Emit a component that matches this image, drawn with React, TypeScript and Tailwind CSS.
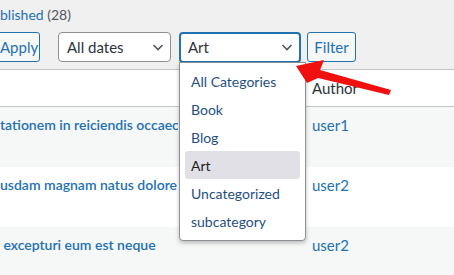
import React from "react";

const font = { fontFamily: 'Lato, "Noto Sans", sans-serif' };

function Chevron() {
  return (
    <svg className="h-[12px] w-[12px] text-[#50575e]" viewBox="0 0 12 12" fill="none" stroke="currentColor" strokeWidth={1.6}>
      <path d="M1.5 4 L6 8.5 L10.5 4" />
    </svg>
  );
}

const categories = ["All Categories", "Book", "Blog", "Art", "Uncategorized", "subcategory"];

const rows = [
  { title: "tationem in reiciendis occaec", author: "user1", bg: "bg-[#f6f7f7]" },
  { title: "usdam magnam natus dolore", author: "user2", bg: "bg-white" },
  { title: " excepturi eum est neque", author: "user2", bg: "bg-[#f6f7f7]" },
];

export default function App() {
  return (
    <div className="relative h-[275px] w-[454px] overflow-hidden bg-[#f0f0f1] text-[14px]" style={font}>
      {/* status links */}
      <div className="h-[32px] pt-[5px] text-[14px] leading-[20px]">
        <span className="text-[#2271b1]">blished</span>{" "}
        <span className="text-[#50575e]">(28)</span>
      </div>

      {/* toolbar */}
      <div className="flex h-[30px] items-center">
        <button className="ml-[-11px] h-[30px] w-[51px] rounded-[3px] border border-[#2271b1] bg-[#f6f7f7] pl-[10px] text-left text-[15px] text-[#2271b1]">
          Apply
        </button>
        <div className="ml-[18px] flex h-[30px] w-[113px] items-center justify-between rounded-[4px] border border-[#8c8f94] bg-white pl-[8px] pr-[6px] text-[15px] text-[#2c3338]">
          <span>All dates</span>
          <Chevron />
        </div>
        <div className="ml-[8px] flex h-[31px] w-[122px] items-center justify-between rounded-[4px] border-2 border-[#2271b1] bg-white pl-[7px] pr-[6px] text-[15px] text-[#2c3338]">
          <span>Art</span>
          <Chevron />
        </div>
        <button className="ml-[6px] h-[30px] w-[49px] rounded-[3px] border border-[#2271b1] bg-[#f6f7f7] text-[15px] text-[#2271b1]">
          Filter
        </button>
      </div>

      {/* table */}
      <div className="mt-[7px] border-t border-[#c3c4c7]">
        <div className="flex h-[37px] items-center border-b border-[#c3c4c7] bg-white">
          <div className="w-[312px]" />
          <div className="text-[15px] text-[#2c3338]">Author</div>
        </div>
        {rows.map((r, i) => (
          <div key={i} className={`flex h-[60px] items-start pt-[7px] ${r.bg}`}>
            <div className="w-[312px]">
              <div className="w-[178px] overflow-hidden whitespace-pre text-[14px] font-semibold text-[#2271b1]">{r.title}</div>
            </div>
            <div className="text-[15px] text-[#2271b1]">{r.author}</div>
          </div>
        ))}
      </div>

      {/* open dropdown */}
      <div className="absolute left-[179px] top-[62px] w-[127px] rounded-b-[4px] border border-[#8c8f94] bg-white px-[5px] pb-[5px] pt-[4px] shadow-[0_2px_4px_rgba(0,0,0,0.25)]">
        {categories.map((c) => (
          <div
            key={c}
            className={`flex h-[28px] items-center rounded-[3px] px-[6px] text-[14px] ${
              c === "Art" ? "bg-[#e1e0e6] text-[#1e1e1e]" : "text-[#1f4f82]"
            }`}
          >
            {c}
          </div>
        ))}
      </div>

      {/* red arrow */}
      <svg className="absolute left-0 top-0" width="454" height="275" viewBox="0 0 454 275">
        <polygon points="296,66 324,60 320,70 391,90 389,95 318,78 307,83" fill="#f01010" />
      </svg>
    </div>
  );
}
